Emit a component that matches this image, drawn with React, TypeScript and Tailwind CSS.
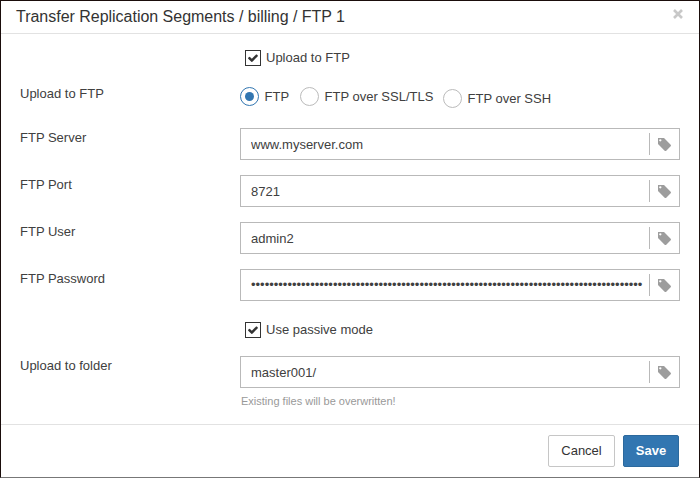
import type { ReactNode } from 'react';

function TagIcon() {
  return (
    <svg viewBox="64 192 1451 1451" className="ml-[7.5px] size-[13px] shrink-0" fill="#9d9d9d">
      <path d="M448 448q0-53-37.5-90.500t-90.500-37.500-90.500 37.500-37.500 90.500 37.500 90.500 90.500 37.500 90.500-37.500 37.500-90.500zM1515 1024q0 53-37 90l-491 492q-39 37-91 37-53 0-90-37l-715-716q-38-37-64.500-101t-26.500-117v-416q0-52 38-90t90-38h416q53 0 117 26.500t102 64.500l715 714q37 39 37 91z" />
    </svg>
  );
}

function Check({ children }: { children: ReactNode }) {
  return (
    <label className="ml-[244px] flex h-4 items-center">
      <span className="flex size-4 items-center justify-center border border-[#333]">
        <svg viewBox="121 270 1550 1252" className="h-2 w-[10px]" fill="#333">
          <path d="M1671 566q0 40-28 68l-724 724-136 136q-28 28-68 28t-68-28l-136-136-362-362q-28-28-28-68t28-68l136-136q28-28 68-28t68 28l294 295 656-657q28-28 68-28t68 28l136 136q28 28 28 68z" />
        </svg>
      </span>
      <span className="ml-[5px]">{children}</span>
    </label>
  );
}

function Radio({ label, checked, className }: { label: string; checked?: boolean; className?: string }) {
  return (
    <label className={`flex h-[19px] items-center ${className ?? ''}`}>
      <span
        className={`flex size-[19px] shrink-0 items-center justify-center rounded-full border ${
          checked ? 'border-[#3276b1]' : 'border-[#bbb]'
        }`}
      >
        {checked && <span className="size-[9px] rounded-full bg-[#3276b1]" />}
      </span>
      <span className="ml-[5.5px] whitespace-nowrap">{label}</span>
    </label>
  );
}

function Field({ label, value, masked, className }: { label: string; value: string; masked?: boolean; className?: string }) {
  return (
    <div className={`flex pl-[19px] ${className ?? ''}`}>
      <span className="w-[220px] leading-[19px]">{label}</span>
      <div className="flex h-8 w-[440px] items-center border border-[#b9b9b9] pl-2.5">
        <span className={`w-[398px] overflow-hidden whitespace-nowrap ${masked ? '' : 'pt-0.5'}`}>{value}</span>
        <span className="h-[22px] w-px bg-[#b9b9b9]" />
        <TagIcon />
      </div>
    </div>
  );
}

export default function App() {
  return (
    <div className="flex h-[478px] w-[700px] flex-col border border-[#1a0d0b] border-b-[#777] bg-white font-['Liberation_Sans',Arial,sans-serif] text-[13px] leading-4 text-[#404040]">
      <header className="flex h-[33px] items-center justify-between border-b border-[#e2e2e2] pl-[15px] pr-4">
        <h1 className="text-[16px] leading-5 tracking-[-0.02px] text-[#333]">Transfer Replication Segments / billing / FTP 1</h1>
        <svg viewBox="0 0 10 10" className="mb-[7px] size-[10px]" stroke="#c8c8c8" strokeWidth="2.6">
          <path d="M1 1L9 9M9 1L1 9" />
        </svg>
      </header>
      <main className="flex h-[390px] flex-col pt-4">
        <Check>Upload to FTP</Check>
        <div className="mt-[18px] flex h-[25px] pl-[19px]">
          <span className="w-[220px] leading-[19px]">Upload to FTP</span>
          <div className="flex pt-[3px]">
            <Radio label="FTP" checked className="w-[60px]" />
            <Radio label="FTP over SSL/TLS" className="w-[143px]" />
            <Radio label="FTP over SSH" className="mt-0.5" />
          </div>
        </div>
        <Field label="FTP Server" value="www.myserver.com" className="mt-[19px]" />
        <Field label="FTP Port" value="8721" className="mt-[15px]" />
        <Field label="FTP User" value="admin2" className="mt-[15px]" />
        <Field label="FTP Password" value={'•'.repeat(86)} masked className="mt-[15px]" />
        <div className="mt-[21px]">
          <Check>Use passive mode</Check>
        </div>
        <Field label="Upload to folder" value="master001/" className="mt-[18px]" />
        <p className="mt-[5px] pl-[240px] text-[11px] text-[#999]">Existing files will be overwritten!</p>
      </main>
      <footer className="flex flex-1 justify-end gap-2 border-t border-[#e2e2e2] pr-5 pt-2.5">
        <button className="h-8 w-[67px] rounded-[2px] border border-[#c6c6c6] bg-white text-[#333]">Cancel</button>
        <button className="h-8 w-14 rounded-[2px] border border-[#2c699d] bg-[#3276b1] font-bold text-white">Save</button>
      </footer>
    </div>
  );
}
